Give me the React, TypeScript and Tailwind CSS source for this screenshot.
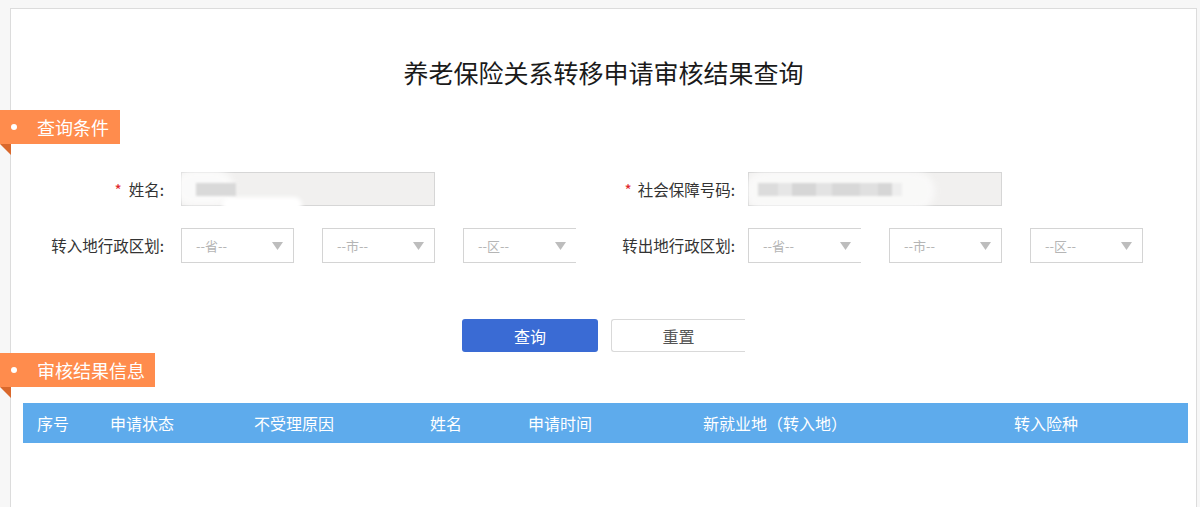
import React from "react";

function Arrow() {
  return (
    <svg width="11" height="8" viewBox="0 0 11 8" className="shrink-0">
      <path d="M0 0 H11 L5.5 8 Z" fill="#bdbdbd" />
    </svg>
  );
}

function Select({ text, noRight }: { text: string; noRight?: boolean }) {
  return (
    <div
      className={
        "flex h-[35px] w-[113px] items-center justify-between border border-[#d4d4d4] bg-white pl-[14px] pr-[10px] text-[13px] leading-none text-[#b5b5b5] " +
        (noRight ? "border-r-0" : "")
      }
    >
      <span>{text}</span>
      <Arrow />
    </div>
  );
}

function SectionTag({ title, width }: { title: string; width: string }) {
  return (
    <div className="relative -ml-[11px]">
      <div
        className={
          "flex h-[34px] items-center bg-[#ff8c4d] text-[18px] leading-none text-white " +
          width
        }
      >
        <span className="ml-[11px] h-[6px] w-[6px] rounded-full bg-white" />
        <span className="ml-[20px]">{title}</span>
      </div>
      <svg
        width="11"
        height="11"
        viewBox="0 0 11 11"
        className="absolute left-0 top-[34px]"
      >
        <path d="M0 0 H11 V11 Z" fill="#d9682c" />
      </svg>
    </div>
  );
}

export default function App() {
  return (
    <div className="min-h-screen overflow-hidden bg-[#f7f7f7] pl-[10px] pr-[3px] pt-[8px] font-['Noto_Sans_CJK_SC','Noto_Sans',sans-serif]">
      <div className="h-[520px] border border-b-0 border-[#dcdcdc] bg-white">
        <h1 className="pt-[46px] text-center text-[25px] leading-[34px] text-[#1a1a1a]">
          养老保险关系转移申请审核结果查询
        </h1>

        <div className="mt-[21px]">
          <SectionTag title="查询条件" width="w-[120px]" />
        </div>

        {/* row 1 */}
        <div className="mt-[28px] flex text-[15.5px] text-[#333]">
          <div className="flex w-[594px] items-center">
            <div className="w-[153px] text-right leading-[34px]">
              <span className="mr-[7px] text-[#e0262d]">*</span>姓名:
            </div>
            <div className="relative ml-[17px] h-[34px] w-[254px] border border-[#d6d6d6] bg-[#f1f0ef]">
              <div className="absolute left-[-8px] top-[-3px] h-[36px] w-[60px] rounded-[18px] bg-white opacity-70 blur-[3px]" />
              <div className="absolute left-[40px] top-[24px] h-[16px] w-[80px] rounded-[8px] bg-white blur-[2px]" />
              <div className="absolute left-[14px] top-[10px] h-[13px] w-[40px] bg-[#d9d9d9] blur-[1px]" />
            </div>
          </div>
          <div className="flex items-center">
            <div className="w-[130px] text-right leading-[34px]">
              <span className="mr-[6px] text-[#e0262d]">*</span>社会保障号码:
            </div>
            <div className="relative ml-[13px] h-[34px] w-[254px] border border-[#d6d6d6] bg-[#f1f0ef]">
              <div className="absolute left-[-4px] top-[-2px] h-[40px] w-[190px] rounded-[20px] bg-white opacity-60 blur-[3px]" />
              <div className="absolute left-[9px] top-[10px] flex h-[13px] blur-[1px]">
                <div className="w-[20px] bg-[#dcdcdc]" />
                <div className="w-[14px] bg-[#e6e6e6]" />
                <div className="w-[24px] bg-[#d6d6d6]" />
                <div className="w-[16px] bg-[#e3e3e3]" />
                <div className="w-[28px] bg-[#d8d8d8]" />
                <div className="w-[18px] bg-[#e0e0e0]" />
                <div className="w-[14px] bg-[#d6d6d6]" />
                <div className="w-[10px] bg-[#eeeeee]" />
              </div>
            </div>
          </div>
        </div>

        {/* row 2 */}
        <div className="mt-[22px] flex text-[15.5px] text-[#333]">
          <div className="flex w-[594px] items-center">
            <div className="w-[153px] text-right leading-[35px]">转入地行政区划:</div>
            <div className="ml-[17px] flex gap-[28px]">
              <Select text="--省--" />
              <Select text="--市--" />
              <Select text="--区--" noRight />
            </div>
          </div>
          <div className="flex items-center">
            <div className="w-[130px] text-right leading-[35px]">转出地行政区划:</div>
            <div className="ml-[13px] flex gap-[28px]">
              <Select text="--省--" noRight />
              <Select text="--市--" />
              <Select text="--区--" />
            </div>
          </div>
        </div>

        {/* buttons */}
        <div className="mt-[56px] flex justify-center gap-[13px]">
          <button className="h-[33px] w-[136px] rounded-[3px] bg-[#3a6bd4] text-[16px] leading-none text-white">
            查询
          </button>
          <button className="h-[33px] w-[134px] rounded-l-[3px] border border-r-0 border-[#d9d9d9] bg-white text-[16px] leading-none text-[#555]">
            重置
          </button>
        </div>

        <div className="mt-px">
          <SectionTag title="审核结果信息" width="w-[155px]" />
        </div>

        {/* table header */}
        <div className="ml-[12px] mr-[8px] mt-[16px] flex h-[40px] items-center bg-[#5eabec] text-[16px] leading-none text-white">
          <div className="w-[87px] pl-[14px]">序号</div>
          <div className="w-[144px]">申请状态</div>
          <div className="w-[176px]">不受理原因</div>
          <div className="w-[98px]">姓名</div>
          <div className="w-[175px]">申请时间</div>
          <div className="w-[311px]">新就业地（转入地）</div>
          <div>转入险种</div>
        </div>
      </div>
    </div>
  );
}
